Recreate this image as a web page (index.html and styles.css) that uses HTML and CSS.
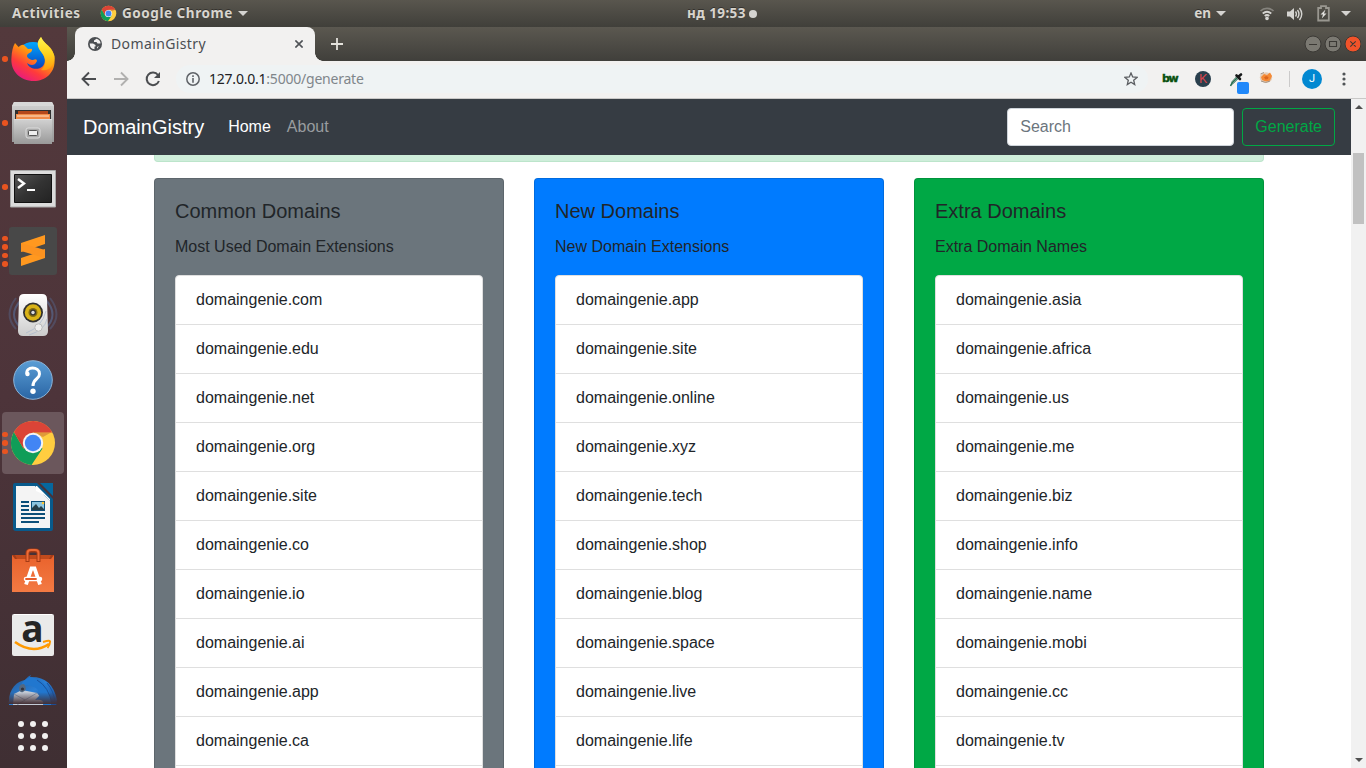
FILE: index.html
```html
<!DOCTYPE html>
<html lang="en">
<head>
<meta charset="utf-8">
<title>DomainGistry</title>
<link rel="stylesheet" href="styles.css">
</head>
<body>
<svg class="defs" width="0" height="0">
  <defs>
    <symbol id="chrome" viewBox="0 0 48 48">
      <circle cx="24" cy="24" r="22" fill="#ffcd40"/>
      <path d="M4.9 13A22 22 0 0 0 22.5 45.9L33.5 29.5L24 24L14.5 29.5Z" fill="#109d58"/>
      <path d="M4.9 13A22 22 0 0 1 43.3 13.6H24L14.5 29.5Z" fill="#db4437"/>
      <path d="M14.5 29.5L6 15L12 20ZM24 13.6H42L34 18Z" fill="#a63a2d" opacity=".35"/>
      <circle cx="24" cy="24" r="10.2" fill="#f4f4f4"/>
      <circle cx="24" cy="24" r="8.2" fill="#4285f4"/>
    </symbol>
    <linearGradient id="ffBody" x1=".8" y1="0" x2=".2" y2="1"><stop offset="0" stop-color="#ffe034"/><stop offset=".42" stop-color="#ff980e"/><stop offset=".7" stop-color="#ff3b3b"/><stop offset="1" stop-color="#e3148c"/></linearGradient>
    <linearGradient id="ffBlue" x1="0" y1="0" x2="0" y2="1"><stop offset="0" stop-color="#00a8ff"/><stop offset=".6" stop-color="#0755cb"/><stop offset="1" stop-color="#38156e"/></linearGradient>
    <linearGradient id="ffTail" x1="0" y1="0" x2="0" y2="1"><stop offset="0" stop-color="#fff44f"/><stop offset=".5" stop-color="#ffd21e"/><stop offset="1" stop-color="#ff980e"/></linearGradient>
    <linearGradient id="steel" x1="0" y1="0" x2="0" y2="1"><stop offset="0" stop-color="#d2d2d2"/><stop offset="1" stop-color="#999"/></linearGradient>
    <linearGradient id="screen" x1="0" y1="0" x2="1" y2="1"><stop offset="0" stop-color="#555"/><stop offset=".5" stop-color="#333"/><stop offset="1" stop-color="#222"/></linearGradient>
    <linearGradient id="white" x1="0" y1="0" x2="0" y2="1"><stop offset="0" stop-color="#fff"/><stop offset="1" stop-color="#ccc"/></linearGradient>
    <linearGradient id="helpBlue" x1="0" y1="0" x2="0" y2="1"><stop offset="0" stop-color="#5a9dd5"/><stop offset="1" stop-color="#2a65a4"/></linearGradient>
    <linearGradient id="bag" x1="0" y1="0" x2="0" y2="1"><stop offset="0" stop-color="#e9622c"/><stop offset="1" stop-color="#f37a43"/></linearGradient>
    <linearGradient id="bird" x1="0" y1="0" x2="1" y2="1"><stop offset="0" stop-color="#23558f"/><stop offset=".5" stop-color="#2a7fd6"/><stop offset="1" stop-color="#1b4388"/></linearGradient>
    <linearGradient id="fade" x1="0" y1="0" x2="0" y2="1"><stop offset=".62" stop-color="#432f34" stop-opacity="0"/><stop offset="1" stop-color="#432f34"/></linearGradient>
  </defs>
</svg>

<header class="topbar">
  <span class="activities">Activities</span>
  <svg class="app-icon" width="17" height="17"><use href="#chrome"/></svg>
  <span class="app-name">Google Chrome</span>
  <i class="caret"></i>
  <div class="clock"><span>нд 19:53</span><i></i></div>
  <div class="status">
    <span>en</span><i class="caret"></i>
    <svg class="wifi" width="16" height="16" viewBox="0 0 16 16" fill="none" stroke="#d5d4d1" stroke-width="1.7"><path d="M1.5 5C5 1.6 11 1.6 14.5 5" stroke="#85837d"/><path d="M3.7 7.5Q8 4 12.3 7.5M5.7 10Q8 8 10.3 10"/><circle cx="8" cy="12.4" r="1.8" fill="#d5d4d1" stroke="none"/></svg>
    <svg class="volume" width="16" height="16" viewBox="0 0 16 16" fill="none" stroke="#d5d4d1" stroke-width="1.4"><path d="M0 5.5H3L7 2V14L3 10.500H0Z" fill="#d5d4d1" stroke="none"/><path d="M8.500 5.500Q10.300 8 8.500 10.500M10.500 4Q13.400 8 10.500 12M12.500 2Q17 8 12.500 14"/></svg>
    <svg class="battery" width="13" height="17" viewBox="0 0 13 17"><path d="M1.200 3H4V1.200H9V3H11.800V15.500H1.200Z" fill="none" stroke="#999790" stroke-width="1.800"/><path d="M8.500 4.500L3.500 9.500H6L4.800 13.500L9.500 8.500H7Z" fill="#e2e1de"/></svg>
    <i class="caret"></i>
  </div>
</header>

<div class="desktop">
  <aside class="dock">
    <div class="app"><span class="dots"><i></i></span>
      <svg width="48" height="48" viewBox="0 0 48 48"><circle cx="24" cy="25" r="18" fill="url(#ffBlue)"/><path d="M6 8L9.500 12Q13 9 15 10L19 14Q24 13 23 15C23 18 18 18 18 21C18 23 22 25 24 25Q28 23 28 26C25 32 21 30 18 28C20 34 29 36 34 31C38 26 35 20 31 15C27 8 31 5 32 2C36 11 44 10 45.500 23C47 38 36 46 25 46C11 46 1 36 2.500 22Q3 13 6 8Z" fill="url(#ffBody)"/><path d="M32 2C27 7 28 12 33 18C38 24 37 31 32 35C41 37 46 29 45.500 21C42 11 35 9 32 2Z" fill="url(#ffTail)"/></svg></div>
    <div class="app"><span class="dots"><i></i></span>
      <svg class="low" width="48" height="48" viewBox="0 0 48 48"><path d="M5 2H43L45 6V42H3V6Z" fill="url(#steel)"/><path d="M3 6L5 2H43L45 6Z" fill="#d8d8d8"/><path d="M6 10H42V19H6Z" fill="#303030"/><path d="M9 11H39V19H9Z" fill="#b5481b"/><path d="M7 14H41V20H7Z" fill="#f08b49"/><path d="M8 16H40" stroke="#ffe2c8"/><path d="M5 19H43V44H5Z" fill="url(#steel)"/><path d="M5 19.500H43" stroke="#ddd"/><rect x="17" y="28" width="14" height="10" rx="2" fill="#aaa" stroke="#ddd"/><rect x="19.500" y="30.500" width="9" height="5" rx="1" fill="#eee" stroke="#555"/></svg></div>
    <div class="app"><span class="dots"><i></i></span>
      <svg class="low" width="48" height="48" viewBox="0 0 48 48"><path d="M1.500 6.500H46.500V43H1.500Z" fill="#dcdcdc" stroke="#aaa"/><path d="M5.500 10.500H42.500V38.500H5.500Z" fill="url(#screen)" stroke="#111"/><path d="M9 15L15 19.500L9 24" fill="none" stroke="#fff" stroke-width="2.400"/><path d="M18 26H26" stroke="#fff" stroke-width="2"/></svg></div>
    <div class="app"><span class="dots"><i></i><i></i><i></i><i></i></span>
      <svg width="48" height="48" viewBox="0 0 48 48"><rect width="48" height="48" rx="3" fill="#484848"/><path d="M12 16L36 8V17L24 21L12 25Z" fill="#ff981f"/><path d="M12 31L24 27L36 22V31L12 39Z" fill="#ff981f"/><path d="M12 16L36 23V31L12 24Z" fill="#fc9320"/></svg></div>
    <div class="app">
      <svg width="48" height="48" viewBox="0 0 48 48"><g fill="none" stroke="#566283" stroke-width="2"><path d="M7 7Q-6 24 7 38" opacity=".5"/><path d="M12 9Q-2 24 12 37" opacity=".8"/><path d="M41 7Q54 24 41 38" opacity=".5"/><path d="M37 9Q50 24 37 37" opacity=".8"/></g><path d="M15 3H33Q38 3 38 8L39 40Q39 45 34 45H14Q9 45 9 40L10 8Q10 3 15 3Z" fill="url(#white)"/><circle cx="24" cy="21.500" r="10" fill="#303030"/><circle cx="24" cy="21.500" r="8.200" fill="#d9b318"/><circle cx="24" cy="21.500" r="4.500" fill="#836c12"/><circle cx="24" cy="21.500" r="3" fill="#333"/><circle cx="24" cy="21.500" r="1.700" fill="#ddd"/><path d="M17 42Q33 36 37 20M20 44Q36 39 38 28" stroke="#a8b7cc" opacity=".7" fill="none"/><circle cx="29.500" cy="36.500" r="3.700" fill="#eee" stroke="#bbb"/></svg></div>
    <div class="app">
      <svg width="48" height="48" viewBox="0 0 48 48"><circle cx="24" cy="25" r="19.300" fill="url(#helpBlue)" stroke="#8cb4d9" stroke-width="1"/><path d="M18 19C16 11 30.500 11 30.500 19C30.500 24.500 24 23 24 31" fill="none" stroke="#fff" stroke-width="3"/><circle cx="18.500" cy="19" r="2.200" fill="#fff"/><circle cx="24" cy="36.300" r="2.700" fill="#fff"/></svg></div>
    <div class="app active"><span class="dots"><i></i><i></i><i></i></span>
      <svg width="48" height="48"><use href="#chrome"/></svg></div>
    <div class="app">
      <svg width="48" height="48" viewBox="0 0 48 48"><path d="M6 0H28L44 16V46Q44 48 41 48H7Q4 48 4 45V2Q4 0 6 0Z" fill="#085a8c"/><path d="M31 0H44V13Z" fill="#06679e"/><path d="M7 3H26L41 18V45H7Z" fill="#f4f4f4"/><path d="M27 3V8Q34 10 41 18V16L28 3Z" fill="#fff"/><path d="M12 19H20M12 23H20M12 27H20M12 31H36M12 35H36M12 39H30" stroke="#0b4f79" stroke-width="2"/><path d="M22 18H36V28H22Z" fill="#0b4f79"/><path d="M23 19H35V27H23Z" fill="#8cc5df"/><path d="M23 27V25L27 21L30 25L32 23L35 26V27Z" fill="#263f48"/><circle cx="34" cy="20" r="1.300" fill="#ffc533"/></svg></div>
    <div class="app">
      <svg width="48" height="48" viewBox="0 0 48 48"><path d="M3 8H45V45H3Z" fill="#a53c17"/><path d="M6 8H42L40 12H8Z" fill="#c04a1c"/><path d="M3 8L6 12H42L45 8V45H3Z" fill="url(#bag)"/><path d="M18.500 15V6Q18.500 3.500 22 3.500H26Q29.500 3.500 29.500 6V15" fill="none" stroke="#a33a15" stroke-width="4"/><path d="M18.500 14V6Q18.500 3 22 3H26Q29.500 3 29.500 6V14" fill="none" stroke="#ed6b37" stroke-width="2"/><path d="M17 37.500L22.500 21.500H25.500L31 37.500" fill="none" stroke="#fff" stroke-width="3.800"/><path d="M17 32H31" stroke="#fff" stroke-width="4.500" stroke-linecap="round"/><path d="M17 32H27" stroke="#e75d2c" stroke-width="1.800" stroke-linecap="round"/></svg></div>
    <div class="app">
      <svg width="48" height="48" viewBox="0 0 48 48"><rect x="3" y="3" width="42" height="42" rx="2" fill="#eaeaea"/><path d="M5 3.500H43" stroke="#fff"/><text x="23.500" y="31" class="amazon" text-anchor="middle">a</text><path d="M6 31Q24 44 40 33" fill="none" stroke="#f90" stroke-width="2.600"/><path d="M34 31Q42 28.500 41 31Q41 34 38.500 37" fill="none" stroke="#f90" stroke-width="1.900"/></svg></div>
    <div class="app clipped">
      <svg width="48" height="48" viewBox="0 0 48 48"><path d="M0 31C-1 16 8 8 16 7Q19 3 22 2L21 4Q43 3 48 27L47 34H0Z" fill="url(#bird)"/><path d="M5 21L13 17L28 20L38 32H4Z" fill="#c3cbd6"/><path d="M5 21L16 27L28 20M16 27L8 32" fill="none" stroke="#8b9bb1"/><path d="M12 13C24 10 31 17 31 22L26 27Q36 26 34 32H42Q43 8 21 4Q13 7 12 13Z" fill="#2177cf"/><path d="M10 16Q10 11 15 11Q19 16 14 19Q11 20 10 16Z" fill="#536880"/><circle cx="13.500" cy="16" r="1.600" fill="#33323b"/><path d="M28 7Q40 14 43 31M38 10Q45 18 46 30" stroke="#18519c" fill="none"/><rect y="0" width="48" height="31" fill="url(#fade)"/></svg></div>
    <svg class="apps-grid" width="30" height="30" viewBox="0 0 30 30" fill="#f2f1f0"><circle cx="3" cy="3" r="3"/><circle cx="15" cy="3" r="3"/><circle cx="27" cy="3" r="3"/><circle cx="3" cy="15" r="3"/><circle cx="15" cy="15" r="3"/><circle cx="27" cy="15" r="3"/><circle cx="3" cy="27" r="3"/><circle cx="15" cy="27" r="3"/><circle cx="27" cy="27" r="3"/></svg>
  </aside>

  <main class="window">
    <div class="tabstrip">
      <div class="tab">
        <svg width="14" height="14" viewBox="0 0 14 14"><circle cx="7" cy="7" r="7" fill="#4c4f52"/><path d="M8.500 1.800L6 3.500V5H8.500L9.500 6.500H12.500Q12.500 3 8.500 1.800ZM1.700 6.500H5L7.500 8V9.500H6.500V12.300Q1.800 12 1.700 6.500ZM9 10L11 9L9 11.800Z" fill="#f2f1f0"/></svg>
        <span>DomainGistry</span>
        <svg class="tab-close" width="8" height="8" viewBox="0 0 8 8" stroke="#505357" stroke-width="1.600"><path d="M.4.4L7.600 7.600M7.600.4L.4 7.600"/></svg>
      </div>
      <svg class="new-tab" width="12" height="12" viewBox="0 0 12 12" stroke="#e4e2dc" stroke-width="1.800"><path d="M6 0V12M0 6H12"/></svg>
      <svg class="window-buttons" width="57" height="18" viewBox="0 0 57 18" fill="none"><g stroke="#3b3935"><circle cx="9" cy="9" r="8" fill="#7b7972"/><circle cx="29" cy="9" r="8" fill="#7b7972"/><circle cx="49" cy="9" r="8" fill="#f1532a"/></g><path d="M5 9.500H13M25.500 6.500H32.500V11.500H25.500ZM46.300 6.300L51.700 11.700M51.700 6.300L46.300 11.700" stroke="#3b3935" stroke-width="1.100"/></svg>
    </div>

    <div class="toolbar">
      <svg class="back" width="16" height="16" viewBox="0 0 16 16" fill="none" stroke="#4b4d50" stroke-width="1.900"><path d="M15 8H2M8 1.500L1.500 8L8 14.500"/></svg>
      <svg class="forward" width="16" height="16" viewBox="0 0 16 16" fill="none" stroke="#b1b0af" stroke-width="1.900"><path d="M1 8H14M8 1.500L14.500 8L8 14.500"/></svg>
      <svg class="reload" width="16" height="16" viewBox="0 0 16 16" fill="none" stroke="#4b4d50" stroke-width="2"><path d="M13 4A6.300 6.300 0 1 0 13.900 10"/><path d="M15 1V7H9Z" fill="#4b4d50" stroke="none"/></svg>
      <div class="address">
        <svg width="14" height="14" viewBox="0 0 14 14" fill="none" stroke="#5f6368"><circle cx="7" cy="7" r="6.200" stroke-width="1.500"/><path d="M7 6V10.700M7 3.300V4.900" stroke-width="1.600"/></svg>
        <span class="url"><b>127.0.0.1</b>:5000/generate</span>
        <svg class="star" width="14" height="14" viewBox="0 0 14 14" fill="none" stroke="#5b5e62" stroke-width="1.300"><path d="M7 1L8.700 5L13 5.400L9.700 8.200L10.700 12.600L7 10.300L3.300 12.600L4.300 8.200L1 5.400L5.300 5Z"/></svg>
      </div>
      <span class="bw">bw</span>
      <span class="ext-k">K</span>
      <svg class="picker" width="20" height="22" viewBox="0 0 20 22"><path d="M2 13L3 9.500L8 4L10 6L5 11Z" fill="#c9dcd5" stroke="#557f70" stroke-width=".8"/><path d="M1.500 14L3.500 10.500L8 6" stroke="#276f50" stroke-width="1.500" fill="none"/><path d="M7.500 3.500L11 7M9 5L12 2.500" stroke="#17191a" stroke-width="2.600" stroke-linecap="round"/><rect x="8" y="10" width="12" height="12" rx="2" fill="#2188fa"/></svg>
      <svg class="fox" width="14" height="13" viewBox="0 0 14 13"><ellipse cx="7" cy="6.500" rx="6.200" ry="5.300" fill="#e5cdb8"/><path d="M2 6L5 3L8 4L11 1.500L13 5L11 9.500L7 10.500L3 9Z" fill="#f48a36"/><path d="M5 6.500L7 5L9.500 6L9 8L6.500 8.500Z" fill="#dc651c"/><path d="M1.500 3L5 1.500M2 10Q7 13 11 10" stroke="#a39586" fill="none"/></svg>
      <i class="separator"></i>
      <span class="avatar">J</span>
      <svg class="menu" width="4" height="14" viewBox="0 0 4 14" fill="#505356"><circle cx="2" cy="2" r="1.600"/><circle cx="2" cy="7" r="1.600"/><circle cx="2" cy="12" r="1.600"/></svg>
    </div>

    <div class="viewport">
      <div class="page">
        <nav class="navbar">
          <a class="brand">DomainGistry</a><a class="nav-link current">Home</a><a class="nav-link">About</a>
          <form class="search"><input type="text" placeholder="Search"><button type="button">Generate</button></form>
        </nav>
        <div class="container">
          <div class="alert"></div>
          <div class="cards">
            <section class="card gray"><h5>Common Domains</h5><p>Most Used Domain Extensions</p>
              <ul><li>domaingenie.com</li><li>domaingenie.edu</li><li>domaingenie.net</li><li>domaingenie.org</li><li>domaingenie.site</li><li>domaingenie.co</li><li>domaingenie.io</li><li>domaingenie.ai</li><li>domaingenie.app</li><li>domaingenie.ca</li><li></li></ul></section>
            <section class="card blue"><h5>New Domains</h5><p>New Domain Extensions</p>
              <ul><li>domaingenie.app</li><li>domaingenie.site</li><li>domaingenie.online</li><li>domaingenie.xyz</li><li>domaingenie.tech</li><li>domaingenie.shop</li><li>domaingenie.blog</li><li>domaingenie.space</li><li>domaingenie.live</li><li>domaingenie.life</li><li></li></ul></section>
            <section class="card green"><h5>Extra Domains</h5><p>Extra Domain Names</p>
              <ul><li>domaingenie.asia</li><li>domaingenie.africa</li><li>domaingenie.us</li><li>domaingenie.me</li><li>domaingenie.biz</li><li>domaingenie.info</li><li>domaingenie.name</li><li>domaingenie.mobi</li><li>domaingenie.cc</li><li>domaingenie.tv</li><li></li></ul></section>
          </div>
        </div>
      </div>
      <div class="scrollbar"><i class="up"></i><i class="thumb"></i><i class="down"></i></div>
    </div>
  </main>
</div>
</body>
</html>
```
FILE: styles.css
```css
* { box-sizing: border-box; }
html, body { height: 100%; }
body { margin: 0; overflow: hidden; display: flex; flex-direction: column; font: 16px/24px "Liberation Sans", Arial, sans-serif; color: #212529; }
svg { display: block; flex: none; }
.defs { position: absolute; }

.topbar { flex: none; height: 27px; display: flex; align-items: center; padding: 0 15px 0 12px; background: linear-gradient(#59564e, #403f3a); color: #d8d5ce; font: bold 13.5px/27px "Noto Sans", sans-serif; text-shadow: 0 -1px #34322e; position: relative; }
.activities { width: 88px; letter-spacing: .6px; }
.app-icon { margin-right: 5px; }
.app-name { width: 111px; white-space: nowrap; letter-spacing: .55px; }
.caret { flex: none; margin-left: 5px; border: 5px solid transparent; border-top-color: #d5d4d1; border-bottom: 0; }
.clock { position: absolute; left: 687px; top: 0; display: flex; align-items: center; gap: 3px; white-space: nowrap; letter-spacing: .4px; }
.clock i { width: 8px; height: 8px; border-radius: 50%; background: #d5d4d1; }
.status { margin-left: auto; display: flex; align-items: center; }
.wifi { margin-left: 33px; }
.volume { margin-left: 12px; }
.battery { margin: 0 6px 0 14px; }

.desktop { flex: 1; min-height: 0; display: flex; }
.dock { flex: none; width: 67px; background: linear-gradient(#53393c, #4d343a 50%, #3f2f33); overflow: hidden; display: flex; flex-direction: column; }
.app { flex: none; height: 64px; position: relative; display: flex; align-items: center; padding-left: 9px; }
.active::before { content: ""; position: absolute; left: 2px; top: 1px; width: 62px; height: 62px; border-radius: 4px; background: #6b575c; }
.app svg { position: relative; overflow: visible; }
.app .low { margin-top: 2px; }
.dots { position: absolute; left: 2px; top: 0; height: 64px; display: flex; flex-direction: column; justify-content: center; gap: 3px; z-index: 1; }
.dots i { width: 5.500px; height: 5.500px; border-radius: 50%; background: #e95420; }
.clipped { height: 38px; overflow: hidden; align-items: flex-start; padding-top: 6px; }
.apps-grid { margin: 16px 0 0 18px; }
.amazon { font: bold 37px "Open Sans", sans-serif; fill: #252525; }

.window { flex: 1; min-width: 0; display: flex; flex-direction: column; }
.tabstrip { flex: none; height: 34px; display: flex; align-items: center; padding: 0 4px 0 8px; background: linear-gradient(#5b5850, #403f3b); }
.tab { position: relative; width: 240px; height: 34px; padding: 0 12px 0 13px; display: flex; align-items: center; border-radius: 8px 8px 0 0; background: #f2f1f0; color: #4b4e52; font: 14px/34px "Noto Sans", sans-serif; }
.tab::before, .tab::after { content: ""; position: absolute; bottom: 0; width: 8px; height: 8px; }
.tab::before { left: -8px; background: radial-gradient(circle at 0 0, transparent 7.500px, #f2f1f0 8px); }
.tab::after { right: -8px; background: radial-gradient(circle at 100% 0, transparent 7.500px, #f2f1f0 8px); }
.tab span { margin-left: 9px; letter-spacing: .38px; }
.tab-close { margin-left: auto; }
.new-tab { margin-left: 16px; }
.window-buttons { margin-left: auto; margin-right: 1px; }

.toolbar { flex: none; height: 38px; padding: 0 20px 1px 14px; display: flex; align-items: center; background: #f2f1f0; border-bottom: 1px solid #c9c8c7; }
.forward, .reload { margin-left: 16px; }
.address { margin-left: 15px; width: 972px; height: 28px; border-radius: 14px; background: #eff3f4; display: flex; align-items: center; padding: 0 10px; }
.url { margin-left: 9px; color: #80868b; font: 14px/28px "Noto Sans", sans-serif; letter-spacing: -.22px; white-space: nowrap; }
.url b { font-weight: 400; color: #202124; }
.star { margin-left: auto; }
.bw { margin-left: 14px; width: 17px; color: #08500e; font: bold 11px/20px "DejaVu Sans", sans-serif; letter-spacing: -1.300px; -webkit-text-stroke: .4px #08500e; }
.ext-k { margin-left: 16px; width: 16px; height: 16px; border-radius: 50%; background: #293f4d; color: #d6454c; text-align: center; font: 13px/16px "Liberation Sans Narrow", Roboto, sans-serif; }
.picker { margin: 7px 0 0 18px; }
.fox { margin: -3px 0 0 10px; }
.separator { width: 1px; height: 16px; margin-left: 16px; background: #cbcaca; }
.avatar { margin-left: 12px; width: 20px; height: 20px; border-radius: 50%; background: #0288d1; color: #fff; text-align: center; font: 11px/20px Roboto, sans-serif; }
.menu { margin-left: auto; }

.viewport { flex: 1; min-height: 0; display: flex; background: #fff; }
.page { flex: 1; min-width: 0; overflow: hidden; }
.navbar { height: 56px; padding: 0 16px; display: flex; align-items: center; background: #363c43; }
.brand { margin-right: 16px; color: #fff; font-size: 20px; line-height: 30px; }
.nav-link { padding: 0 8px; color: #999c9f; }
.current { color: #fff; }
.search { margin: 0 0 0 auto; display: flex; gap: 8px; }
.search input { width: 227px; height: 38px; padding: 6px 12px; border: 1px solid #ced4da; border-radius: 4px; font: inherit; }
.search input::placeholder { color: #6c757d; opacity: 1; }
.search button { height: 38px; padding: 6px 12px; border: 1px solid #00a845; border-radius: 4px; background: transparent; color: #00a845; font: inherit; }
.container { width: 1110px; margin: 0 auto; }
.alert { height: 7px; border: 1px solid #bce5cb; border-top: 0; border-radius: 0 0 4px 4px; background: #ceedda; }
.cards { display: grid; grid-template-columns: repeat(3, 350px); gap: 30px; margin-top: 16px; }
.card { padding: 20px; border: 1px solid rgba(0, 0, 0, .125); border-radius: 4px; }
.gray { background: #6b757c; }
.blue { background: #007bff; }
.green { background: #00a845; }
.card h5 { margin: 0 0 12px; font-size: 20px; font-weight: 400; line-height: 24px; }
.card p { margin: 0 0 16px; }
.card ul { margin: 0; padding: 0; list-style: none; }
.card li { height: 50px; margin-bottom: -1px; padding: 12px 20px; border: 1px solid #dfdfdf; background: #fff; }
.card li:first-child { border-radius: 4px 4px 0 0; }
.scrollbar { flex: none; width: 15px; padding: 6px 2px; background: #f1f1f1; display: flex; flex-direction: column; align-items: center; }
.up, .down { border: 4px solid transparent; }
.up { border-bottom-color: #505050; border-top: 0; }
.down { margin-top: auto; border-top-color: #505050; border-bottom: 0; }
.thumb { width: 11px; height: 71px; margin-top: 44px; background: #c1c1c1; }
```
